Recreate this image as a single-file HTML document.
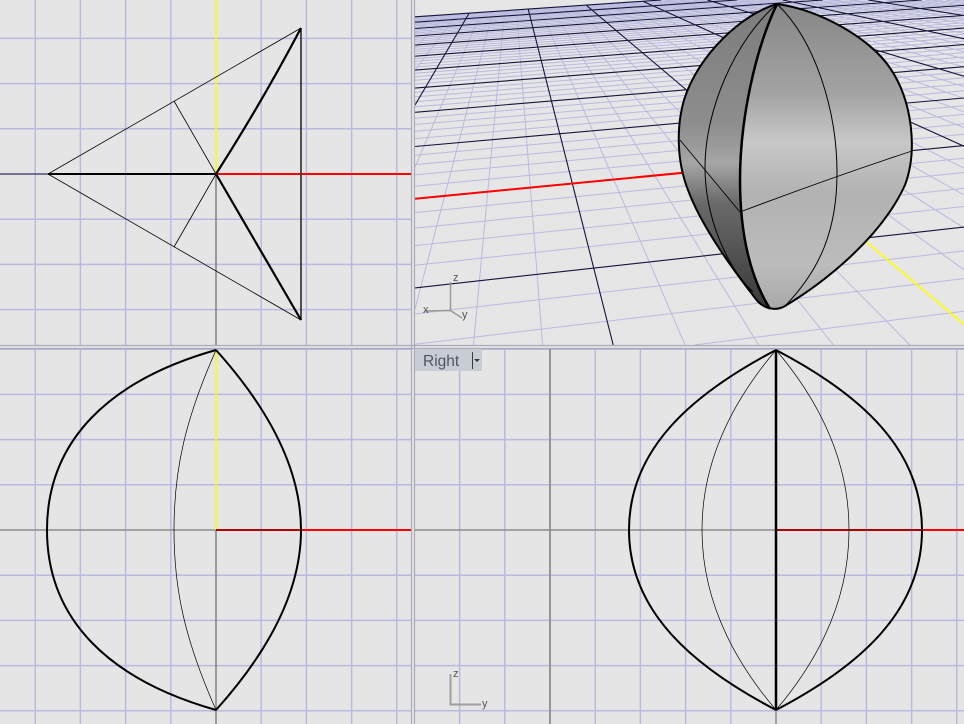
<!DOCTYPE html>
<html><head><meta charset="utf-8"><style>
html,body{margin:0;padding:0;background:#e5e5e5;width:964px;height:724px;overflow:hidden;position:relative}
svg{display:block;position:absolute;left:0;top:0;overflow:hidden}
script{display:none}
.lbl{font-family:"Liberation Sans",sans-serif;}
</style></head><body>
<svg id="s" width="964" height="724" viewBox="0 0 964 724" xmlns="http://www.w3.org/2000/svg">
<defs>
<clipPath id="cTL"><rect x="0" y="0" width="411" height="345"/></clipPath>
<clipPath id="cTR"><rect x="415" y="0" width="549" height="345"/></clipPath>
<clipPath id="cBL"><rect x="0" y="349" width="411" height="375"/></clipPath>
<clipPath id="cBR"><rect x="415" y="349" width="549" height="375"/></clipPath>
<linearGradient id="gR" gradientUnits="userSpaceOnUse" x1="0" y1="4" x2="0" y2="310">
<stop offset="0" stop-color="#868686"/><stop offset="0.3" stop-color="#a4a4a4"/><stop offset="0.45" stop-color="#c8c8c8"/><stop offset="0.62" stop-color="#b2b2b2"/><stop offset="0.85" stop-color="#bcbcbc"/><stop offset="1" stop-color="#a8a8a8"/></linearGradient>
<linearGradient id="gL" gradientUnits="userSpaceOnUse" x1="0" y1="4" x2="0" y2="310">
<stop offset="0" stop-color="#7c7c7c"/><stop offset="0.4" stop-color="#8e8e8e"/><stop offset="0.52" stop-color="#a6a6a6"/><stop offset="0.65" stop-color="#6a6a6a"/><stop offset="1" stop-color="#383838"/></linearGradient>
</defs>
<rect width="964" height="724" fill="#e5e5e5"/>
<g id="TL" clip-path="url(#cTL)"></g>
<g id="BL" clip-path="url(#cBL)"></g>
<g id="BR" clip-path="url(#cBR)"></g>
<g id="TR" clip-path="url(#cTR)"></g>
<g stroke="#a9abbb" stroke-width="1.2" fill="none">
<line x1="411.5" y1="0" x2="411.5" y2="724"/><line x1="414.5" y1="0" x2="414.5" y2="724"/>
<line x1="0" y1="345.5" x2="964" y2="345.5"/><line x1="0" y1="348.5" x2="964" y2="348.5"/>
</g>
<g clip-path="url(#cTL)" fill="none" stroke="#000">
<line x1="0" y1="174" x2="48" y2="174" stroke="#303060" stroke-width="1.2"/>
<line x1="216" y1="0" x2="216" y2="174" stroke="#ffff00" stroke-width="1.5"/>
<line x1="216" y1="174" x2="216" y2="345" stroke="#6a6a6a" stroke-width="1.2"/>
<line x1="216" y1="174" x2="411" y2="174" stroke="#ff0000" stroke-width="2"/>
<line x1="48" y1="174" x2="301" y2="28" stroke-width="0.8"/>
<line x1="48" y1="174" x2="301" y2="320" stroke-width="0.8"/>
<line x1="301" y1="28" x2="301" y2="320" stroke-width="1.3"/>
<line x1="48" y1="174" x2="216" y2="174" stroke-width="2"/>
<path d="M216,174 Q262,102 301,28" stroke-width="2.2"/>
<line x1="216" y1="174" x2="301" y2="320" stroke-width="2.2"/>
<line x1="216" y1="174" x2="174" y2="101" stroke-width="0.8"/>
<line x1="216" y1="174" x2="174" y2="247" stroke-width="0.8"/>
</g>
<g clip-path="url(#cBL)" fill="none" stroke="#000">
<line x1="0" y1="530" x2="411" y2="530" stroke="#8c8c8c" stroke-width="1.5"/>
<line x1="216" y1="530" x2="216" y2="724" stroke="#6a6a6a" stroke-width="1.2"/>
<line x1="216" y1="350" x2="216" y2="530" stroke="#ffff00" stroke-width="1.5"/>
<line x1="216" y1="530" x2="411" y2="530" stroke="#ff0000" stroke-width="2"/>
<line x1="216" y1="530" x2="301" y2="530" stroke="#b00000" stroke-width="2"/>
<path d="M216,350 C110,380 47,440 47,530 C47,620 110,680 216,710" stroke-width="2"/>
<path d="M216,350 C270,410 301,470 301,530 C301,590 270,650 216,710" stroke-width="2"/>
<path d="M216,350 C185,420 174,470 174,530 C174,590 185,640 216,710" stroke-width="0.7"/>
</g>
<g clip-path="url(#cBR)" fill="none" stroke="#000">
<line x1="550" y1="349" x2="550" y2="724" stroke="#8e8e8e" stroke-width="1.8"/>
<line x1="415" y1="530" x2="776" y2="530" stroke="#8c8c8c" stroke-width="1.5"/>
<line x1="776" y1="349" x2="776" y2="724" stroke="#8c8c8c" stroke-width="1.5"/>
<line x1="776" y1="530" x2="964" y2="530" stroke="#ff0000" stroke-width="2"/>
<line x1="776" y1="530" x2="922" y2="530" stroke="#b00000" stroke-width="2"/>
<path d="M776,350 C690,395 629,450 629,530 C629,610 690,665 776,710" stroke-width="2"/>
<path d="M776,350 C862,395 922,450 922,530 C922,610 862,665 776,710" stroke-width="2"/>
<path d="M776,350 C725,410 702,470 702,530 C702,590 725,650 776,710" stroke-width="0.7"/>
<path d="M776,350 C827,410 849,470 849,530 C849,590 827,650 776,710" stroke-width="0.7"/>
<line x1="776" y1="350" x2="776" y2="710" stroke-width="2.5"/>
<path d="M450.5,674 V704.5 H481" stroke="#a0a0a0" stroke-width="2"/>
</g>
<text x="453" y="677" class="lbl" font-size="11" fill="#555">z</text>
<text x="482" y="707" class="lbl" font-size="11" fill="#555">y</text>
<rect x="415" y="349" width="67" height="22" fill="#c8cdd5"/>
<text x="423" y="366" class="lbl" font-size="15.5" fill="#4f5462">Right</text>
<line x1="472.5" y1="352" x2="472.5" y2="369" stroke="#3a3a3a" stroke-width="1"/>
<path d="M474,359 L480,359 L477,362 Z" fill="#3a3a3a"/>
</svg>
<script>
(function(){
var NS="http://www.w3.org/2000/svg";
function el(p,tag,a){var e=document.createElementNS(NS,tag);for(var k in a)e.setAttribute(k,a[k]);p.appendChild(e);return e;}
function ln(g,x1,y1,x2,y2,c,w){el(g,"line",{x1:x1,y1:y1,x2:x2,y2:y2,stroke:c,"stroke-width":w});}
var minor="#b9b9df";
function ortho(id,cx,cy,x0,x1,y0,y1){
  var g=document.getElementById(id),s=45.2;
  for(var k=-12;k<=12;k++){var x=cx+k*s;if(x>=x0&&x<=x1&&k!==0)ln(g,x,y0,x,y1,minor,1.5);
    var y=cy+k*s;if(y>=y0&&y<=y1&&k!==0)ln(g,x0,y,x1,y,minor,1.5);}
}
ortho("TL",216,174,0,411,0,345);
ortho("BL",216,530,0,411,349,724);
ortho("BR",776,530,415,964,349,724);
var src=[[0,0],[5,0],[0,5],[5,5]],dst=[[774,164],[572.3,183.5],[862,238.4],[593.7,268.1]];
var A=[],b=[];
for(var i=0;i<4;i++){var X=src[i][0],Y=src[i][1],u=dst[i][0],v=dst[i][1];
 A.push([X,Y,1,0,0,0,-u*X,-u*Y]);b.push(u);A.push([0,0,0,X,Y,1,-v*X,-v*Y]);b.push(v);}
for(var c=0;c<8;c++){var p=c;for(var r=c+1;r<8;r++)if(Math.abs(A[r][c])>Math.abs(A[p][c]))p=r;
 var t=A[c];A[c]=A[p];A[p]=t;t=b[c];b[c]=b[p];b[p]=t;
 for(var r=0;r<8;r++){if(r===c)continue;var f=A[r][c]/A[c][c];for(var k=c;k<8;k++)A[r][k]-=f*A[c][k];b[r]-=f*b[c];}}
var h=[];for(var i=0;i<8;i++)h.push(b[i]/A[i][i]);
function P(X,Y){var w=h[6]*X+h[7]*Y+1;return [(h[0]*X+h[1]*Y+h[2])/w,(h[3]*X+h[4]*Y+h[5])/w,w];}
var RX0=415,RX1=964,RY0=0,RY1=345;
function clip(x0,y0,x1,y1){
 var t0=0,t1=1,dx=x1-x0,dy=y1-y0,p=[-dx,dx,-dy,dy],q=[x0-RX0,RX1-x0,y0-RY0,RY1-y0];
 for(var i=0;i<4;i++){if(p[i]===0){if(q[i]<0)return null;}else{var r=q[i]/p[i];if(p[i]<0){if(r>t1)return null;if(r>t0)t0=r;}else{if(r<t0)return null;if(r<t1)t1=r;}}}
 return [x0+t0*dx,y0+t0*dy,x0+t1*dx,y0+t1*dy];
}
function seg(g,X0,Y0,X1,Y1,col,wd){
 var w0=h[6]*X0+h[7]*Y0+1,w1=h[6]*X1+h[7]*Y1+1,e=0.03;
 if(w0<e&&w1<e)return;
 if(w0<e){var t=(e-w0)/(w1-w0);X0=X0+t*(X1-X0);Y0=Y0+t*(Y1-Y0);}
 else if(w1<e){var t=(e-w1)/(w0-w1);X1=X1+t*(X0-X1);Y1=Y1+t*(Y0-Y1);}
 var a=P(X0,Y0),q=P(X1,Y1);var c=clip(a[0],a[1],q[0],q[1]);if(!c)return;
 ln(g,c[0].toFixed(1),c[1].toFixed(1),c[2].toFixed(1),c[3].toFixed(1),col,wd);
}
var g=document.getElementById("TR"),N=50;
el(g,"rect",{x:415,y:0,width:549,height:345,fill:"#e6e6e6"});
for(var k=-N;k<=N;k++){if(k%5===0)continue;seg(g,k,-N,k,N,minor,1);seg(g,-N,k,N,k,minor,1);}
for(var k=-N;k<=N;k+=5){if(k===0)continue;seg(g,k,-N,k,N,"#14143c",1.1);seg(g,-N,k,N,k,"#14143c",1.1);}
seg(g,0,-N,0,0,"#14143c",1.1);seg(g,-N,0,0,0,"#14143c",1.1);
seg(g,0,0,N,0,"#ff0000",2);seg(g,0,0,0,N,"#ffff00",1.6);
var o=el(g,"g",{fill:"none",stroke:"#000"});
var outline="M777,4 C742,14 698,55 684,100 C676,128 677,162 688,190 C702,228 735,272 755,298 C762,308 775,312 785,306 C820,285 880,240 905,185 C918,150 912,100 890,68 C870,38 820,10 777,4 Z";
el(o,"path",{d:outline,fill:"url(#gR)",stroke:"none"});
el(o,"path",{d:"M777,4 C742,14 698,55 684,100 C676,128 677,162 688,190 C702,228 735,272 755,298 C760,305 765,309 770,309 C752,280 740,240 740,180 C740,120 755,50 777,4 Z",fill:"url(#gL)",stroke:"none"});
el(o,"path",{d:"M777,4 C735,40 705,110 705,167 C705,215 725,265 753,292","stroke-width":1});
el(o,"path",{d:"M777,4 C815,40 837,110 837,173 C837,230 820,270 785,306","stroke-width":1});
el(o,"path",{d:"M680,140 L740,212 Q830,178 912,151","stroke-width":0.9});
el(o,"path",{d:"M777,4 C755,50 740,120 740,180 C740,240 752,280 770,309","stroke-width":2.5});
el(o,"path",{d:outline,"stroke-width":2});
var ic=el(g,"g",{stroke:"#9a9a9a","stroke-width":1.5,fill:"none"});
el(ic,"path",{d:"M450.5,282 V310.5 L425,311 M450.5,310.5 L462,318"});
var t1=el(g,"text",{x:453,y:281,"font-size":11,fill:"#555","class":"lbl"});t1.textContent="z";
var t2=el(g,"text",{x:423,y:313,"font-size":11,fill:"#555","class":"lbl"});t2.textContent="x";
var t3=el(g,"text",{x:462,y:318,"font-size":11,fill:"#555","class":"lbl"});t3.textContent="y";
})();
</script>
</body></html>
